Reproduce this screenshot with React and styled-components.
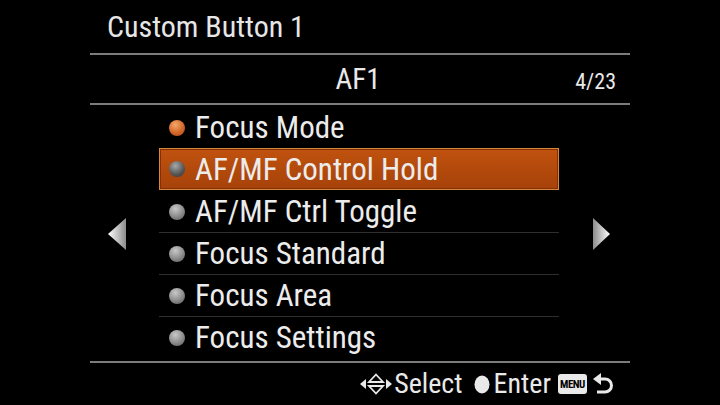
import React from "react";
import styled, { createGlobalStyle } from "styled-components";

const GlobalStyle = createGlobalStyle`
  html, body {
    margin: 0;
    padding: 0;
    background: #000;
  }
  body {
    font-family: Roboto, "Liberation Sans", sans-serif;
    font-stretch: 75%;
    color: #e9e9e9;
  }
`;

const items = [
  { label: "Focus Mode", current: true },
  { label: "AF/MF Control Hold", selected: true },
  { label: "AF/MF Ctrl Toggle" },
  { label: "Focus Standard" },
  { label: "Focus Area" },
  { label: "Focus Settings" },
];

const App = () => {
  const selectedIndex = items.findIndex((i) => i.selected);

  return (
    <>
      <GlobalStyle />
      <Screen>
        <Frame>
          <Header>
            <Title>Custom Button 1</Title>
          </Header>
          <SubHeader>
            <span />
            <TabName>AF1</TabName>
            <PageCount>4/23</PageCount>
          </SubHeader>
          <Body>
            <Arrow>
              <svg width="18" height="32" viewBox="0 0 18 32">
                <defs>
                  <linearGradient id="la" x1="0" x2="1" y1="0" y2="0">
                    <stop offset="0" stopColor="#ffffff" />
                    <stop offset="1" stopColor="#8c8c8c" />
                  </linearGradient>
                </defs>
                <polygon points="0,16 18,0 18,32" fill="url(#la)" />
              </svg>
            </Arrow>
            <List>
              {items.map((item, i) => (
                <Row
                  key={item.label}
                  $selected={item.selected}
                  $divider={i > 0 && !item.selected && i - 1 !== selectedIndex}
                >
                  <Bullet $current={item.current} $selected={item.selected} />
                  <Label>{item.label}</Label>
                </Row>
              ))}
            </List>
            <Arrow $right>
              <svg width="17" height="32" viewBox="0 0 17 32">
                <defs>
                  <linearGradient id="ra" x1="0" x2="1" y1="0" y2="0">
                    <stop offset="0" stopColor="#8c8c8c" />
                    <stop offset="1" stopColor="#ffffff" />
                  </linearGradient>
                </defs>
                <polygon points="0,0 17,16 0,32" fill="url(#ra)" />
              </svg>
            </Arrow>
          </Body>
          <Footer>
            <Hint $gap={2}>
              <svg width="32" height="22" viewBox="0 0 32 22">
                <polygon points="0,11 6,6 6,16" fill="#e9e9e9" />
                <polygon points="16,1.5 23,9 9,9" fill="none" stroke="#e9e9e9" strokeWidth="1.8" />
                <polygon points="9,13 23,13 16,20.5" fill="none" stroke="#e9e9e9" strokeWidth="1.8" />
                <polygon points="32,11 26,6 26,16" fill="#e9e9e9" />
              </svg>
              <HintText>Select</HintText>
            </Hint>
            <Hint $gap={4} $space={11}>
              <svg width="16" height="19" viewBox="0 0 16 19">
                <ellipse cx="8" cy="9.5" rx="7.5" ry="9" fill="#e9e9e9" />
              </svg>
              <HintText>Enter</HintText>
            </Hint>
            <Hint $gap={6} $space={7}>
              <MenuKey>MENU</MenuKey>
              <svg width="21" height="23" viewBox="0 0 21 23">
                <polygon points="0,6 8,0 8,12" fill="#e9e9e9" />
                <path
                  d="M7 6 H12 A6.5 6.5 0 0 1 12 19 H4"
                  fill="none"
                  stroke="#e9e9e9"
                  strokeWidth="3"
                />
              </svg>
            </Hint>
          </Footer>
        </Frame>
      </Screen>
    </>
  );
};

const Screen = styled.div`
  width: 720px;
  height: 405px;
  background: #000;
  overflow: hidden;
`;

const Frame = styled.div`
  margin: 0 90px;
  height: 100%;
  display: flex;
  flex-direction: column;
`;

const Header = styled.div`
  height: 53px;
  border-bottom: 2px solid #7c7c7c;
  display: flex;
  align-items: center;
  padding-left: 17px;
  box-sizing: content-box;
`;

const Title = styled.h1`
  margin: 0;
  font-size: 30px;
  font-weight: normal;
  color: #e6e6e6;
  line-height: 1;
`;

const SubHeader = styled.div`
  height: 48px;
  border-bottom: 2px solid #7c7c7c;
  display: grid;
  grid-template-columns: 1fr auto 1fr;
  align-items: center;
`;

const TabName = styled.div`
  font-size: 29px;
  line-height: 1;
  margin-left: -4px;
`;

const PageCount = styled.div`
  justify-self: end;
  padding-right: 14px;
  padding-top: 6px;
  font-size: 22px;
  line-height: 1;
`;

const Body = styled.div`
  height: 255px;
  padding-top: 1px;
  border-bottom: 2px solid #7c7c7c;
  display: flex;
  align-items: center;
`;

const Arrow = styled.div`
  display: flex;
  margin-left: ${(p) => (p.$right ? "34px" : "18px")};
  margin-right: ${(p) => (p.$right ? "0" : "33px")};
`;

const List = styled.div`
  width: 400px;
  align-self: flex-start;
  display: flex;
  flex-direction: column;
`;

const Row = styled.div`
  height: 42px;
  box-sizing: border-box;
  display: flex;
  align-items: center;
  padding-left: 10px;
  border-top: 1px solid ${(p) => (p.$divider ? "#2f2f2f" : "transparent")};
  ${(p) =>
    p.$selected &&
    `
    border: 1px solid #cf8a3c;
    padding-left: 9px;
    background: linear-gradient(#c0520e, #a6420a);
    box-shadow: inset 0 0 0 1px #8c2c04;
  `}
`;

const Bullet = styled.span`
  width: 16px;
  height: 16px;
  border-radius: 50%;
  flex: none;
  margin-right: 10px;
  background: ${(p) =>
    p.$current
      ? "radial-gradient(circle at 40% 30%, #f4a868, #d2662a 55%, #a8461a)"
      : p.$selected
      ? "radial-gradient(circle at 40% 30%, #a8a8a8, #5a5a5a 55%, #2c2c2c)"
      : "radial-gradient(circle at 40% 30%, #c8c8c8, #8a8a8a 55%, #555)"};
`;

const Label = styled.span`
  font-size: 31px;
  line-height: 1;
  color: #ececec;
`;

const Footer = styled.div`
  flex: 1;
  display: flex;
  align-items: center;
  justify-content: flex-end;
  padding-right: 16px;
`;

const Hint = styled.div`
  display: flex;
  align-items: center;
  gap: ${(p) => p.$gap}px;
  margin-left: ${(p) => p.$space || 0}px;
`;

const HintText = styled.span`
  font-size: 28px;
  line-height: 1;
`;

const MenuKey = styled.span`
  display: inline-flex;
  align-items: center;
  justify-content: center;
  width: 29px;
  height: 20px;
  border-radius: 3px;
  background: #e9e9e9;
  color: #000;
  font-size: 11px;
  font-weight: bold;
  letter-spacing: -0.5px;
`;

export default App;
